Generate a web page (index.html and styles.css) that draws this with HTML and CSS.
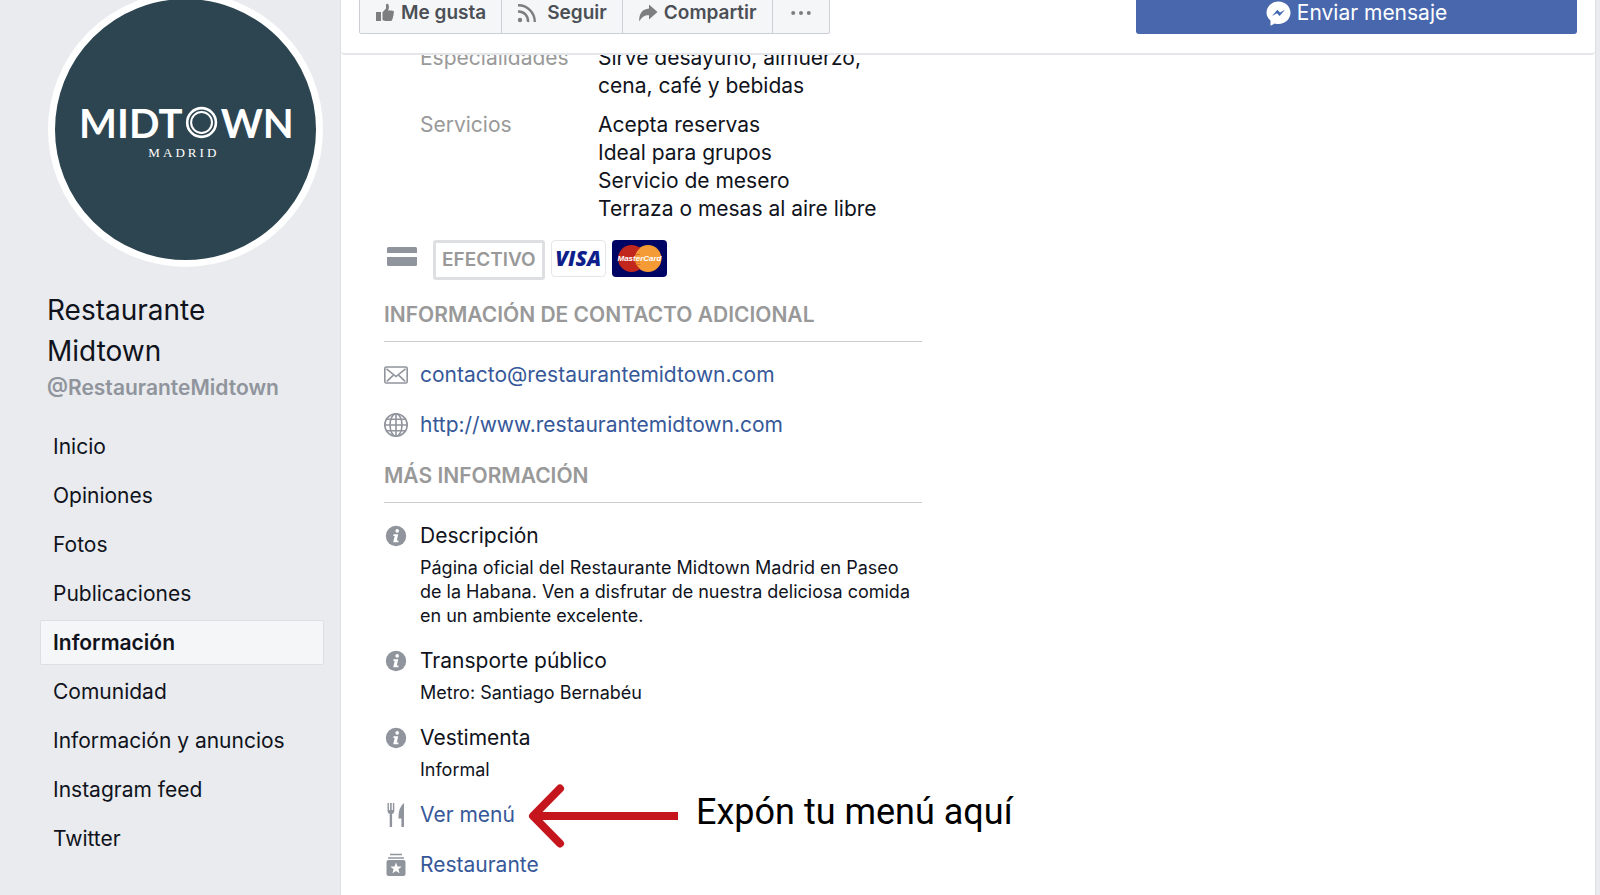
FILE: index.html
```html
<!DOCTYPE html>
<html lang="es">
<head>
<meta charset="utf-8">
<title>Restaurante Midtown</title>
<link rel="stylesheet" href="styles.css">
</head>
<body>
<svg class="defs" aria-hidden="true">
  <symbol id="info" viewBox="0 0 24 24">
    <circle cx="12" cy="12" r="10.2" fill="#90949c"/>
    <circle cx="13.2" cy="6.9" r="1.8" fill="#fff"/>
    <path d="M9.6 10.2h4.6l-1.4 6.2h1.6v1.8H9.2l1.5-6.2H9.3z" fill="#fff"/>
  </symbol>
</svg>
<div class="page">
  <aside class="sidebar">
    <div class="avatar">
      <svg class="logo" viewBox="0 0 260 260" role="img" aria-label="Midtown Madrid">
        <g class="logo-name">
          <text x="24" y="138">MIDT</text>
          <text x="165" y="138">WN</text>
        </g>
        <circle cx="146" cy="123" r="14.300" fill="none" stroke="#fff" stroke-width="2.600"/>
        <circle cx="146" cy="123" r="10.400" fill="none" stroke="#fff" stroke-width="2"/>
        <text class="logo-city" x="93" y="157">MADRID</text>
      </svg>
    </div>
    <h1 class="name">Restaurante Midtown</h1>
    <p class="handle">@RestauranteMidtown</p>
    <nav class="nav">
      <a href="#">Inicio</a>
      <a href="#">Opiniones</a>
      <a href="#">Fotos</a>
      <a href="#">Publicaciones</a>
      <a href="#" class="active" aria-current="page">Información</a>
      <a href="#">Comunidad</a>
      <a href="#">Información y anuncios</a>
      <a href="#">Instagram feed</a>
      <a href="#">Twitter</a>
    </nav>
  </aside>
  <main class="main">
    <header class="topbar">
      <div class="actions">
        <button type="button">
          <svg width="20" height="20" viewBox="0 0 20 20" fill="#7d7e80"><path d="M1 9h5v9H1zM7.500 9.200 11 5.500V2q0-1.500 1.500-1.200C14.500 1.500 14 5 13.300 7.500H17q2 .1 2 1.700 0 1-.6 1.500.7 1.600-.4 2.600.5 1.500-.6 2.400.3 2.200-2 2.300h-4.500q-2 0-3.400-1z"/></svg>
          Me gusta</button>
        <button type="button">
          <svg width="20" height="20" viewBox="0 0 20 20" fill="none" stroke="#7d7e80" stroke-width="2.400"><circle cx="3" cy="17" r="2.200" fill="#7d7e80" stroke="none"/><path d="M1 8.500A9.500 9.500 0 0 1 11 19M1 2.200A16.500 16.500 0 0 1 17.800 19"/></svg>
          <span class="spaced">Seguir</span></button>
        <button type="button">
          <svg width="20" height="20" viewBox="0 0 20 20" fill="#7d7e80"><path d="M11 1.500 19.500 9 11 16.500V12.300C6.500 12.200 4 14 1.200 18.500 .8 11 4 6 11 5.500z"/></svg>
          Compartir</button>
        <button type="button" aria-label="Más">
          <svg width="20" height="20" viewBox="0 0 20 20" fill="#7d7e80"><circle cx="2.200" cy="10" r="2"/><circle cx="10" cy="10" r="2"/><circle cx="17.800" cy="10" r="2"/></svg>
        </button>
      </div>
      <button type="button" class="message">
        <svg width="25" height="25" viewBox="0 0 25 25"><path d="M12.500.5C5.800.5.500 5.400.500 11.800q0 4.200 4 7.800v5.200l4.400-2.400q1.700.6 3.600.6c6.700 0 12-5 12-11.200S19.200.5 12.500.5z" fill="#fff"/><path d="M6 15 11.400 8.800 14 11.400 19 8.800 13.600 15 11 12.300z" fill="#4267b2"/></svg>
        Enviar mensaje</button>
    </header>
    <div class="content">
      <dl class="specs">
        <dt>Especialidades</dt>
        <dd>Sirve desayuno, almuerzo,<br>cena, café y bebidas</dd>
        <dt>Servicios</dt>
        <dd>Acepta reservas<br>Ideal para grupos<br>Servicio de mesero<br>Terraza o mesas al aire libre</dd>
      </dl>
      <div class="payments">
        <svg class="pay-icon" width="30" height="20" viewBox="0 0 30 20" fill="#90949c"><path d="M1.500 0h27q1.500 0 1.500 1.500V6H0V1.500Q0 0 1.500 0zM0 10h30v7.500q0 1.500-1.500 1.500h-27Q0 19 0 17.500z"/></svg>
        <span class="cash">EFECTIVO</span>
        <span class="card visa">VISA</span>
        <span class="card">
          <svg width="55" height="37" viewBox="0 0 55 37" role="img" aria-label="MasterCard"><rect width="55" height="37" rx="4" fill="#000463"/><circle cx="19.500" cy="18.500" r="13.500" fill="#c1271c"/><circle cx="36" cy="18.500" r="13.500" fill="#f49b35"/><path d="M28 7.600a13.500 13.500 0 0 0 0 21.800" fill="none" stroke="#c1271c"/><path d="M23 14.500h5M22.500 22h5.500M23.500 24.500h5" stroke="#e06a28"/><text class="mc" x="27.500" y="21" text-anchor="middle">MasterCard</text></svg>
        </span>
      </div>
      <h2 class="heading">INFORMACIÓN DE CONTACTO ADICIONAL</h2>
      <ul class="list contact">
        <li>
          <svg width="24" height="24" viewBox="0 0 24 24" fill="none" stroke="#90949c" stroke-width="1.600"><rect x=".8" y="4" width="22.400" height="16" rx="1.500"/><path d="M2.500 5.800 12 13.500l9.500-7.700M2.800 18.300l6.400-6M21.200 18.300l-6.400-6"/></svg>
          <a href="#">contacto@restaurantemidtown.com</a>
        </li>
        <li>
          <svg width="24" height="24" viewBox="0 0 24 24" fill="none" stroke="#90949c" stroke-width="1.600"><circle cx="12" cy="12" r="11.200"/><ellipse cx="12" cy="12" rx="6" ry="11.200"/><path d="M12 .8v22.400M.8 12h22.400M2.500 6.200h19M2.500 17.800h19"/></svg>
          <a href="#">http://www.restaurantemidtown.com</a>
        </li>
      </ul>
      <h2 class="heading more">MÁS INFORMACIÓN</h2>
      <ul class="list">
        <li>
          <svg width="24" height="24"><use href="#info"/></svg>
          <div><h3>Descripción</h3>
          <p>Página oficial del Restaurante Midtown Madrid en Paseo<br>de la Habana. Ven a disfrutar de nuestra deliciosa comida<br>en un ambiente excelente.</p></div>
        </li>
        <li>
          <svg width="24" height="24"><use href="#info"/></svg>
          <div><h3>Transporte público</h3><p>Metro: Santiago Bernabéu</p></div>
        </li>
        <li>
          <svg width="24" height="24"><use href="#info"/></svg>
          <div><h3>Vestimenta</h3><p>Informal</p></div>
        </li>
      </ul>
      <ul class="list links">
        <li>
          <svg width="24" height="24" viewBox="0 0 24 24" fill="#90949c"><path d="M3.500 0h1.400v7h1.200V0h1.600v7h1.200V0h1.400v8q0 2.300-2.200 3v13H5.700V11q-2.200-.7-2.200-3zM20 0v24h-2.600v-8.500h-3Q14.300 4 20 0z"/></svg>
          <a href="#">Ver menú</a>
          <div class="callout">
            <svg width="150" height="64" viewBox="0 0 150 64" fill="none" stroke="#c4161c" stroke-width="8"><path d="M6 32H150"/><path d="M32 4.500 5 32 32 59.500" stroke-linecap="round" stroke-linejoin="round"/></svg>
            <span>Expón tu menú aquí</span>
          </div>
        </li>
        <li>
          <svg width="24" height="24" viewBox="0 0 24 24"><path d="M6 1.600h12M4 5h16" stroke="#90949c" stroke-width="1.500"/><rect x="2.500" y="7" width="19" height="16" rx="2" fill="#90949c"/><path d="m12 9.500 1.500 3.900 4.200.2-3.300 2.600 1.200 4-3.600-2.300-3.600 2.300 1.200-4-3.300-2.600 4.200-.2z" fill="#fff"/></svg>
          <a href="#">Restaurante</a>
        </li>
      </ul>
    </div>
  </main>
</div>
</body>
</html>
```

FILE: styles.css
```css
* { box-sizing: border-box; }
body {
  margin: 0;
  height: 100vh;
  overflow: hidden;
  background: #e9ebee;
  color: #10131c;
  font-family: Inter, "Liberation Sans", sans-serif;
  font-size: 21px;
  line-height: 28px;
}
h1, h2, h3, p, ul, dl, dd { margin: 0; padding: 0; }
ul { list-style: none; }
a { color: #365899; text-decoration: none; }
button { font: inherit; cursor: pointer; }
svg { display: block; flex: none; }
.defs { position: absolute; width: 0; height: 0; }

/* The page is scrolled down a little, so the top edge is cut off. */
.page {
  display: grid;
  grid-template-columns: 340px 1fr;
  min-height: calc(100vh + 8px);
  margin: -8px 4px 0 0;
}

.sidebar { padding: 0 16px 0 40px; }
.avatar {
  width: 275px;
  height: 275px;
  margin-left: 8px;
  border: 7px solid #fff;
  border-radius: 50%;
  background: #2d4550;
}
.logo { width: 100%; height: 100%; fill: #fff; }
.logo-name { font-family: Lato, sans-serif; font-size: 40px; font-weight: 700; }
.logo-city { font-family: "Liberation Serif", serif; font-size: 13px; letter-spacing: 3px; }
.name {
  max-width: 240px;
  margin: 23px 0 0 7px;
  font-size: 28px;
  font-weight: 400;
  line-height: 41px;
}
.handle { margin-left: 7px; color: #90949c; font-weight: 600; line-height: 32px; }
.nav { display: flex; flex-direction: column; gap: 4px; margin-top: 20px; }
.nav a {
  padding: 8px 12px;
  border: 1px solid transparent;
  border-radius: 2px;
  color: inherit;
  line-height: 27px;
}
.nav .active { background: #f5f6f7; border-color: #dddfe2; font-weight: 600; }

.main { background: #fff; border: solid #dddfe2; border-width: 0 1px; }
.topbar {
  position: relative;
  z-index: 1;
  display: flex;
  justify-content: space-between;
  padding: 0 18px 19px 18px;
  background: #fff;
  border-bottom: 2px solid #e5e6e9;
  border-radius: 0 0 4px 4px;
}
.actions { display: flex; }
.actions button {
  display: flex;
  align-items: center;
  gap: 6px;
  height: 42px;
  margin-left: -1px;
  padding: 0 15px;
  border: 1px solid #ccd0d5;
  background: #f5f6f7;
  color: #4b4f56;
  font-size: 19px;
  font-weight: 600;
}
.actions button:first-child { margin-left: 0; border-radius: 0 0 0 2px; }
.actions button:last-child { padding: 0 18px; border-radius: 0 0 2px 0; }
.spaced { padding-left: 4px; }
.message {
  display: flex;
  align-items: center;
  justify-content: center;
  gap: 6px;
  width: 441px;
  height: 42px;
  border: 0;
  border-radius: 3px;
  background: #4867ad;
  color: #fff;
}

.content { max-width: 581px; margin-top: -11px; padding-left: 43px; }
.specs {
  display: grid;
  grid-template-columns: 177px 1fr;
  row-gap: 11px;
  padding-left: 36px;
}
.specs dt { color: #999; }
.specs dd { padding-left: 1px; }
.payments { display: flex; gap: 6px; margin-top: 17px; }
.pay-icon { margin: 7px 10px 0 3px; }
.cash {
  height: 40px;
  padding: 3px 6px;
  border: 3px solid #dddfe2;
  border-radius: 3px;
  color: #999;
  font-size: 19px;
  font-weight: 600;
}
.card { width: 55px; height: 37px; }
.visa {
  border: 1px solid #e5e6e9;
  border-radius: 4px;
  color: #0e1f8c;
  font: italic 800 21px/35px "Open Sans", sans-serif;
  text-align: center;
}
.mc { fill: #fff; font: italic 700 8px "Liberation Sans", sans-serif; }
.heading {
  margin-top: 21px;
  padding-bottom: 12px;
  border-bottom: 1px solid #ccc;
  color: #999;
  font-size: 21px;
  font-weight: 600;
}
.more { margin-top: 23px; }
.list { display: flex; flex-direction: column; gap: 19px; margin-top: 19px; }
.contact, .links { gap: 22px; }
.list li { position: relative; display: flex; gap: 12px; }
.list li > svg { margin-top: 2px; }
.list h3 { font-size: 21px; font-weight: 400; }
.list p { margin-top: 6px; font-size: 18px; line-height: 24px; white-space: nowrap; }
.callout {
  position: absolute;
  top: -17px;
  left: 144px;
  display: flex;
  gap: 18px;
  color: #000;
  font-family: Roboto, sans-serif;
  font-size: 36px;
  line-height: 56px;
  white-space: nowrap;
}
```
